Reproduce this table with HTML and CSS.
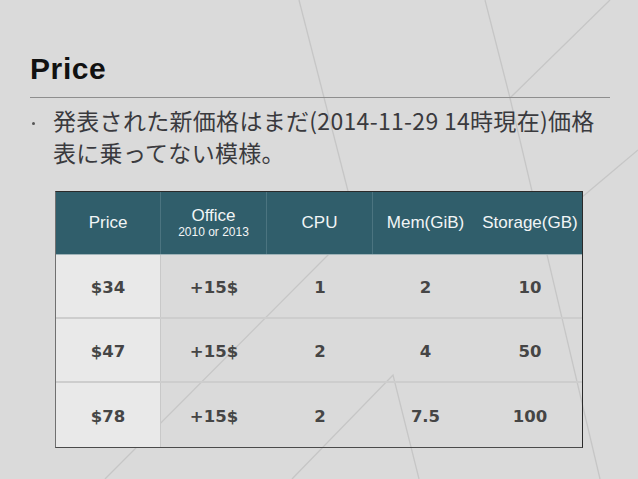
FILE: index.html
```html
<!DOCTYPE html>
<html lang="ja">
<head>
<meta charset="utf-8">
<title>Price</title>
<link rel="stylesheet" href="styles.css">
</head>
<body>
<svg class="bg" width="638" height="479" viewBox="0 0 638 479" aria-hidden="true">
  <g class="bg-lines">
    <path d="M299 0 L349 195"/>
    <path d="M292 479 L393 375 L419 479"/>
    <path d="M330 253 L105 479"/>
    <path d="M485 0 L510 98 L610 0"/>
    <path d="M510 98 L600 479"/>
    <path d="M638 150 L575 203"/>
  </g>
</svg>
<main class="slide">
  <h1 class="title">Price</h1>
  <ul class="points">
    <li class="point"><span class="dot"></span><span class="text">発表された新価格はまだ(2014-11-29 14時現在)価格<br>表に乗ってない模様。</span></li>
  </ul>
  <div class="table">
    <div class="row head">
      <div class="cell">Price</div>
      <div class="cell stack"><span class="main">Office</span><span class="sub">2010 or 2013</span></div>
      <div class="cell">CPU</div>
      <div class="cell">Mem(GiB)</div>
      <div class="cell">Storage(GB)</div>
    </div>
    <div class="row body">
      <div class="cell first">$34</div>
      <div class="cell">+15$</div>
      <div class="cell">1</div>
      <div class="cell">2</div>
      <div class="cell">10</div>
    </div>
    <div class="row body">
      <div class="cell first">$47</div>
      <div class="cell">+15$</div>
      <div class="cell">2</div>
      <div class="cell">4</div>
      <div class="cell">50</div>
    </div>
    <div class="row body last">
      <div class="cell first">$78</div>
      <div class="cell">+15$</div>
      <div class="cell">2</div>
      <div class="cell">7.5</div>
      <div class="cell">100</div>
    </div>
  </div>
</main>
</body>
</html>
```
FILE: styles.css
```css
html, body {
  margin: 0;
  padding: 0;
}
body {
  width: 638px;
  height: 479px;
  background: #dadada;
  position: relative;
  overflow: hidden;
  font-family: "Liberation Sans", Arial, sans-serif;
}
.bg {
  position: absolute;
  left: 0;
  top: 0;
  z-index: 0;
}
.bg-lines path {
  fill: none;
  stroke: #c6c6c6;
  stroke-width: 1.3;
}
.slide {
  position: relative;
  z-index: 1;
  padding: 51px 28px 0 30px;
}
.title {
  margin: 0;
  font-family: "Liberation Sans", Arial, sans-serif;
  font-weight: bold;
  font-size: 30px;
  line-height: 36px;
  letter-spacing: 0.6px;
  color: #111;
  padding-bottom: 10px;
  border-bottom: 1px solid #8e8e8e;
}
.points {
  list-style: none;
  margin: 6px 0 0;
  padding: 0;
}
.point {
  display: flex;
  font-family: "Noto Sans CJK JP", sans-serif;
  font-size: 23px;
  line-height: 32px;
  letter-spacing: 0.3px;
  color: #3a3a3e;
}
.dot {
  flex: none;
  width: 3px;
  height: 3px;
  border-radius: 50%;
  background: #555;
  margin: 18px 18px 0 2px;
}
.text {
  white-space: nowrap;
}
.table {
  margin: 23px 0 0 25px;
  width: 528px;
  box-sizing: border-box;
  border: 1px solid #2a2a2a;
  border-left-color: #707070;
  border-bottom-color: #4a4a4a;
}
.row {
  display: grid;
  grid-template-columns: 105px 106px 106px 105px 1fr;
}
.cell {
  display: flex;
  align-items: center;
  justify-content: center;
}
.head {
  height: 62px;
  background: #305e6b;
  color: #f2f5f6;
  border-bottom: 1px solid #9fb3b8;
  font-size: 17px;
}
.head .cell:nth-child(-n+3) {
  border-right: 1px solid #4b7480;
}
.stack {
  flex-direction: column;
}
.stack .main {
  font-size: 17px;
  line-height: 18px;
}
.stack .sub {
  font-size: 12px;
  line-height: 14px;
}
.body {
  height: 62px;
  border-bottom: 2px solid #cdcdcd;
  font-family: "DejaVu Sans", sans-serif;
  font-weight: bold;
  font-size: 16.5px;
  color: #454545;
}
.body.last {
  height: 64px;
  border-bottom: none;
}
.body .cell {
  padding-top: 3px;
}
.body .first {
  background: #e9e9e9;
  border-right: 1px solid #c8c8c8;
}
```
